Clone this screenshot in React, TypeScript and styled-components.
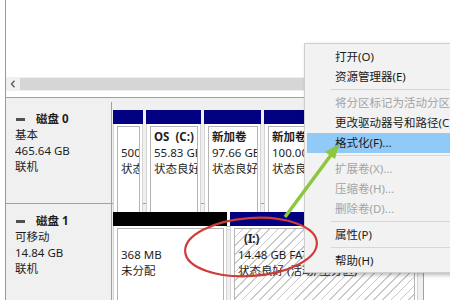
import React from "react";
import styled, { createGlobalStyle } from "styled-components";

const GlobalStyle = createGlobalStyle`
  html, body { margin: 0; padding: 0; background: #fff; }
  body { font-family: "Noto Sans", "Noto Sans CJK SC", sans-serif; }
`;

const Screen = styled.div`
  position: relative;
  width: 450px;
  height: 300px;
  overflow: hidden;
  background: #fff;
  font-size: 11.5px;
  color: #1e1e1e;
`;

const Frame = styled.div`
  margin-left: 5px;
  height: 100%;
  border-left: 1px solid #9a9a9a;
  display: flex;
  flex-direction: column;
`;

const TopPane = styled.div`
  height: 77px;
  flex-shrink: 0;
`;

const HScroll = styled.div`
  height: 14px;
  flex-shrink: 0;
  display: flex;
  align-items: center;
  background: #f0f0f0;
`;

const ScrollArrow = styled.div`
  width: 14px;
  height: 14px;
  display: flex;
  align-items: center;
  justify-content: center;
`;

const ScrollThumb = styled.div`
  flex: 1;
  height: 12px;
  background: #d6d6d6;
`;

const Gap = styled.div`
  height: 6px;
  flex-shrink: 0;
`;

const DiskList = styled.div`
  flex: 1;
  width: 418px;
  box-sizing: border-box;
  border-top: 1px solid #a0a0a0;
  border-right: 1px solid #a0a0a0;
  background: #f0f0f0;
  padding-top: 4px;
`;

const DiskRow = styled.div<{ h?: number }>`
  display: flex;
  height: ${(p) => (p.h ? `${p.h}px` : "auto")};
  border-bottom: 1px solid #a0a0a0;
`;

const DiskLabel = styled.div`
  width: 106px;
  box-sizing: border-box;
  border-right: 1px solid #a0a0a0;
  padding: 9px 0 0 9px;
  line-height: 16px;
`;

const DiskTitle = styled.div`
  display: flex;
  align-items: center;
  font-weight: bold;
`;

const DiskIcon = styled.span`
  width: 9px;
  height: 3px;
  background: #505050;
  margin: 0 11px 0 1px;
`;

const Partitions = styled.div`
  flex: 1;
  display: flex;
  gap: 3px;
  padding: 8px 0 5px 1px;
  min-height: 120px;
`;

const Partition = styled.div<{ w: number }>`
  width: ${(p) => p.w}px;
  flex-shrink: 0;
  display: flex;
  flex-direction: column;
`;

const PartHead = styled.div<{ color: string }>`
  height: 14px;
  background: ${(p) => p.color};
`;

const PartBody = styled.div`
  flex: 1;
  display: flex;
  padding: 2px 2px 2px 3px;
  background: #fff;
  border: 1px solid #d4d4d4;
  border-top: none;
`;

const PartInner = styled.div<{ hatched?: boolean }>`
  flex: 1;
  min-width: 0;
  border: 1px solid #b4b4b4;
  padding: 2px 0 0 3px;
  line-height: 16px;
  overflow: hidden;
  white-space: pre;
  background: ${(p) =>
    p.hatched
      ? "repeating-linear-gradient(135deg, #ffffff 0 5px, #c9c9c9 5px 6.2px)"
      : "#fff"};
`;

const PartName = styled.div`
  font-weight: bold;
  height: 16px;
`;

const Menu = styled.div`
  position: absolute;
  left: 304px;
  top: 43px;
  width: 170px;
  height: 230px;
  box-sizing: border-box;
  padding: 3px 0 1px;
  background: #f2f2f2;
  border: 1px solid #cfcfcf;
  box-shadow: 2px 2px 4px rgba(0, 0, 0, 0.28);
  font-family: "Noto Sans", "Noto Sans CJK SC", sans-serif;
`;

const MenuItem = styled.div<{ disabled?: boolean; active?: boolean }>`
  height: 20px;
  line-height: 20px;
  margin: 0 2px;
  padding-left: 28px;
  white-space: nowrap;
  color: ${(p) => (p.disabled ? "#a3a3a3" : "#1a1a1a")};
  background: ${(p) => (p.active ? "#91c9f7" : "transparent")};
`;

const MenuSep = styled.div`
  height: 1px;
  margin: 2px 0 3px 26px;
  background: #d7d7d7;
`;

const Overlay = styled.svg`
  position: absolute;
  left: 0;
  top: 0;
  pointer-events: none;
`;

type Part = {
  w: number;
  color: string;
  name?: string;
  size: string;
  status: string;
  hatched?: boolean;
};

const disk0: Part[] = [
  { w: 30, color: "#000080", size: "500 MB", status: "状态良好 (EFI 系统分区)" },
  { w: 55, color: "#000080", name: "OS  (C:)", size: "55.83 GB NTFS", status: "状态良好 (启动, 页面文件, 故障转储)" },
  { w: 57, color: "#000080", name: "新加卷", size: "97.66 GB NTFS", status: "状态良好 (基本数据分区)" },
  { w: 60, color: "#000080", name: "新加卷", size: "100.00 GB NTFS", status: "状态良好 (基本数据分区)" },
  { w: 60, color: "#000080", name: "新加卷", size: "212.65 GB NTFS", status: "状态良好 (基本数据分区)" },
];

const disk1: Part[] = [
  { w: 114, color: "#000000", size: "368 MB", status: "未分配" },
  { w: 188, color: "#000080", name: "  (I:)", size: "14.48 GB FAT32", status: "状态良好 (活动, 主分区)", hatched: true },
];

const PartView = ({ p }: { p: Part }) => (
  <Partition w={p.w}>
    <PartHead color={p.color} />
    <PartBody>
      <PartInner hatched={p.hatched}>
        <PartName>{p.name ?? ""}</PartName>
        <div>{p.size}</div>
        <div>{p.status}</div>
      </PartInner>
    </PartBody>
  </Partition>
);

const App = () => {
  return (
    <>
      <GlobalStyle />
      <Screen>
        <Frame>
          <TopPane />
          <HScroll>
            <ScrollArrow>
              <svg width="6" height="8" viewBox="0 0 6 8">
                <polyline points="4.5,0.8 1.5,4 4.5,7.2" fill="none" stroke="#555" strokeWidth="1.3" />
              </svg>
            </ScrollArrow>
            <ScrollThumb />
          </HScroll>
          <Gap />
          <DiskList>
            <DiskRow h={101}>
              <DiskLabel>
                <DiskTitle>
                  <DiskIcon />
                  磁盘 0
                </DiskTitle>
                <div>基本</div>
                <div>465.64 GB</div>
                <div>联机</div>
              </DiskLabel>
              <Partitions>
                {disk0.map((p, i) => (
                  <PartView key={i} p={p} />
                ))}
              </Partitions>
            </DiskRow>
            <DiskRow>
              <DiskLabel>
                <DiskTitle>
                  <DiskIcon />
                  磁盘 1
                </DiskTitle>
                <div>可移动</div>
                <div>14.84 GB</div>
                <div>联机</div>
              </DiskLabel>
              <Partitions>
                {disk1.map((p, i) => (
                  <PartView key={i} p={p} />
                ))}
              </Partitions>
            </DiskRow>
          </DiskList>
        </Frame>

        <Menu>
          <MenuItem>打开(O)</MenuItem>
          <MenuItem>资源管理器(E)</MenuItem>
          <MenuSep />
          <MenuItem disabled>将分区标记为活动分区(M)</MenuItem>
          <MenuItem>更改驱动器号和路径(C)...</MenuItem>
          <MenuItem active>格式化(F)...</MenuItem>
          <MenuSep />
          <MenuItem disabled>扩展卷(X)...</MenuItem>
          <MenuItem disabled>压缩卷(H)...</MenuItem>
          <MenuItem disabled>删除卷(D)...</MenuItem>
          <MenuSep />
          <MenuItem>属性(P)</MenuItem>
          <MenuSep />
          <MenuItem>帮助(H)</MenuItem>
        </Menu>

        {/* annotation drawn over the screenshot */}
        <Overlay width="450" height="300" viewBox="0 0 450 300">
          <ellipse
            cx="251"
            cy="247"
            rx="66"
            ry="29"
            transform="rotate(-4 251 247)"
            fill="none"
            stroke="#cf3b36"
            strokeWidth="2.2"
          />
          <line x1="285" y1="217" x2="331" y2="155" stroke="#8dc63f" strokeWidth="3.5" />
          <polygon points="339,144 335,159 325,152" fill="#8dc63f" />
        </Overlay>
      </Screen>
    </>
  );
};

export default App;
